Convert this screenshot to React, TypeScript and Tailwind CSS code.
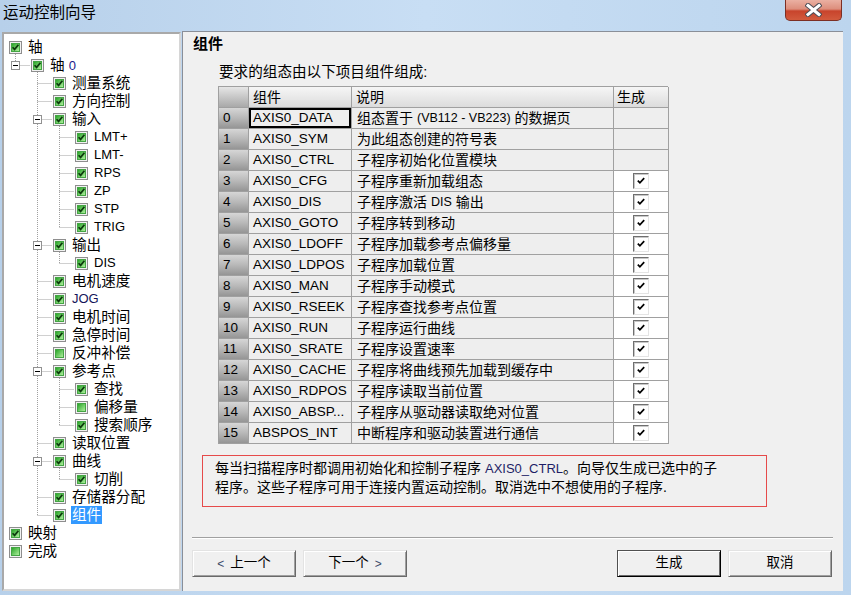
import React from 'react';

type TNode = { label: string; level: number; checked: boolean; exp?: boolean; sel?: boolean; latin?: boolean; navy?: boolean };

const tree: TNode[] = [
  { label: '轴', level: 0, checked: true },
  { label: '轴 0', level: 1, checked: true, exp: true },
  { label: '测量系统', level: 2, checked: true },
  { label: '方向控制', level: 2, checked: true },
  { label: '输入', level: 2, checked: true, exp: true },
  { label: 'LMT+', level: 3, checked: true, latin: true },
  { label: 'LMT-', level: 3, checked: true, latin: true },
  { label: 'RPS', level: 3, checked: true, latin: true },
  { label: 'ZP', level: 3, checked: true, latin: true },
  { label: 'STP', level: 3, checked: true, latin: true },
  { label: 'TRIG', level: 3, checked: true, latin: true },
  { label: '输出', level: 2, checked: true, exp: true },
  { label: 'DIS', level: 3, checked: true, latin: true },
  { label: '电机速度', level: 2, checked: true },
  { label: 'JOG', level: 2, checked: true, latin: true, navy: true },
  { label: '电机时间', level: 2, checked: true },
  { label: '急停时间', level: 2, checked: true },
  { label: '反冲补偿', level: 2, checked: false },
  { label: '参考点', level: 2, checked: true, exp: true },
  { label: '查找', level: 3, checked: true },
  { label: '偏移量', level: 3, checked: false },
  { label: '搜索顺序', level: 3, checked: true },
  { label: '读取位置', level: 2, checked: true },
  { label: '曲线', level: 2, checked: true, exp: true },
  { label: '切削', level: 3, checked: true },
  { label: '存储器分配', level: 2, checked: true },
  { label: '组件', level: 2, checked: true, sel: true },
  { label: '映射', level: 0, checked: true },
  { label: '完成', level: 0, checked: false },
];

const padByLevel = ['pl-[5px]', 'pl-[27px]', 'pl-[49px]', 'pl-[71px]'];

const ROW = 18;
const xc = (l: number) => 11 + 22 * l;

function TreeCheck({ checked }: { checked: boolean }) {
  return (
    <svg width="13" height="13" viewBox="0 0 13 13" className="shrink-0">
      <defs>
        <linearGradient id="tg" x1="0" y1="0" x2="1" y2="1">
          <stop offset="0" stopColor="#22a022" />
          <stop offset="1" stopColor="#b6f4a4" />
        </linearGradient>
      </defs>
      <rect x="0.5" y="0.5" width="12" height="12" fill="#f2f2f2" stroke="#8e8e8e" />
      <rect x="2.5" y="2.5" width="8" height="8" fill="url(#tg)" stroke="#44a544" />
      {checked && <path d="M3.6 6.2 L5.6 8.4 L9.4 3.8" stroke="#0d3a0d" strokeWidth="1.7" fill="none" />}
    </svg>
  );
}

function TreeLines() {
  const lines: React.ReactNode[] = [];
  const boxes: React.ReactNode[] = [];
  tree.forEach((n, i) => {
    if (n.level >= 1) {
      const y = ROW * i + 9.5;
      lines.push(
        <line key={'h' + i} x1={xc(n.level - 1) + 0.5} y1={y} x2={5 + 22 * n.level - 1} y2={y} stroke="#a0a0a0" strokeDasharray="1 1" />
      );
    }
    const kids: number[] = [];
    for (let j = i + 1; j < tree.length; j++) {
      if (tree[j].level <= n.level) break;
      if (tree[j].level === n.level + 1) kids.push(j);
    }
    if (kids.length) {
      const q = kids[kids.length - 1];
      lines.push(
        <line key={'v' + i} x1={xc(n.level) + 0.5} y1={ROW * i + 16} x2={xc(n.level) + 0.5} y2={ROW * q + 10} stroke="#a0a0a0" strokeDasharray="1 1" />
      );
    }
    if (n.exp) {
      const cx = xc(n.level - 1);
      const cy = ROW * i + 9;
      boxes.push(
        <g key={'b' + i}>
          <rect x={cx - 4 + 0.5} y={cy - 4 + 0.5} width="8" height="8" fill="#fff" stroke="#919191" />
          <line x1={cx - 2} y1={cy + 0.5} x2={cx + 3} y2={cy + 0.5} stroke="#000" />
        </g>
      );
    }
  });
  return (
    <svg className="absolute left-0 top-0 pointer-events-none" width="175" height={ROW * tree.length}>
      {lines}
      {boxes}
    </svg>
  );
}

function Tree() {
  return (
    <div className="w-[179px] mt-[1px] bg-white border-2 border-[#a9a9a9] border-r-[#d6d6d6] border-b-[#d6d6d6] pt-[4px]">
      <div className="relative">
        <TreeLines />
        {tree.map((n, i) => (
          <div key={i} className={`relative h-[18px] flex items-center ${padByLevel[n.level]}`}>
            <TreeCheck checked={n.checked} />
            <span
              className={`ml-[5px] h-[18px] leading-[18px] px-[1px] ${n.sel ? 'bg-[#3399ff] text-white' : n.navy ? 'text-[#14145a]' : 'text-black'} ${n.latin ? 'text-[13px]' : 'text-[14.6px]'}`}
            >
              {n.label === '轴 0' ? (
                <>
                  轴 <span className="text-[13px] text-[#1c1c8a]">0</span>
                </>
              ) : (
                n.label
              )}
            </span>
          </div>
        ))}
      </div>
    </div>
  );
}

type Row = { n: number; comp: string; desc: React.ReactNode; gen: boolean };

const L = ({ children }: { children: React.ReactNode }) => <span className="text-[12.5px] mx-[4px]">{children}</span>;

const rows: Row[] = [
  { n: 0, comp: 'AXIS0_DATA', desc: <>组态置于<L>(VB112 - VB223)</L>的数据页</>, gen: false },
  { n: 1, comp: 'AXIS0_SYM', desc: '为此组态创建的符号表', gen: false },
  { n: 2, comp: 'AXIS0_CTRL', desc: '子程序初始化位置模块', gen: false },
  { n: 3, comp: 'AXIS0_CFG', desc: '子程序重新加载组态', gen: true },
  { n: 4, comp: 'AXIS0_DIS', desc: <>子程序激活<L>DIS</L>输出</>, gen: true },
  { n: 5, comp: 'AXIS0_GOTO', desc: '子程序转到移动', gen: true },
  { n: 6, comp: 'AXIS0_LDOFF', desc: '子程序加载参考点偏移量', gen: true },
  { n: 7, comp: 'AXIS0_LDPOS', desc: '子程序加载位置', gen: true },
  { n: 8, comp: 'AXIS0_MAN', desc: '子程序手动模式', gen: true },
  { n: 9, comp: 'AXIS0_RSEEK', desc: '子程序查找参考点位置', gen: true },
  { n: 10, comp: 'AXIS0_RUN', desc: '子程序运行曲线', gen: true },
  { n: 11, comp: 'AXIS0_SRATE', desc: '子程序设置速率', gen: true },
  { n: 12, comp: 'AXIS0_CACHE', desc: '子程序将曲线预先加载到缓存中', gen: true },
  { n: 13, comp: 'AXIS0_RDPOS', desc: '子程序读取当前位置', gen: true },
  { n: 14, comp: 'AXIS0_ABSP...', desc: '子程序从驱动器读取绝对位置', gen: true },
  { n: 15, comp: 'ABSPOS_INT', desc: '中断程序和驱动装置进行通信', gen: true },
];

function CellCheck() {
  return (
    <div className="w-[16px] h-[16px] bg-white border border-t-[#6f6f6f] border-l-[#6f6f6f] border-r-[#e4e4e4] border-b-[#e4e4e4] shadow-[inset_1px_1px_0_#c8c8c8] flex items-center justify-center">
      <svg width="10" height="10" viewBox="0 0 10 10">
        <path d="M1.8 4.6 L3.9 6.8 L8.2 2.2" stroke="#000" strokeWidth="1.7" fill="none" />
      </svg>
    </div>
  );
}

function Table() {
  const cell = 'h-[21px] border-r border-b border-[#a0a0a0] flex items-center';
  return (
    <div className="ml-[35px] mt-[5px] w-[450px] grid grid-cols-[30px_103px_262px_55px] border-t border-l border-[#a0a0a0]">
      <div className={`${cell} bg-gradient-to-b from-[#e6e6e6] to-[#a9a9a9]`} />
      <div className={`${cell} bg-gradient-to-b from-[#f6f6f6] to-[#dcdcdc] pl-[4px] text-[14px]`}>组件</div>
      <div className={`${cell} bg-gradient-to-b from-[#f6f6f6] to-[#dcdcdc] pl-[4px] text-[14px]`}>说明</div>
      <div className={`${cell} bg-gradient-to-b from-[#f6f6f6] to-[#dcdcdc] pl-[3px] text-[14px]`}>生成</div>
      {rows.map((r) => (
        <React.Fragment key={r.n}>
          <div className={`${cell} bg-gradient-to-b from-[#d6d6d6] via-[#b8b8b8] to-[#959595] pl-[4px] text-[13.5px]`}>{r.n}</div>
          <div
            className={`${cell} bg-[#eeeeee] pl-[4px] text-[13.5px] ${r.n === 0 ? 'shadow-[inset_0_0_0_2px_#000]' : ''}`}
          >
            {r.comp}
          </div>
          <div className={`${cell} bg-[#eeeeee] pl-[5px] text-[14px] whitespace-nowrap`}>{r.desc}</div>
          <div className={`${cell} justify-center ${r.gen ? 'bg-white' : 'bg-[#eeeeee]'}`}>{r.gen && <CellCheck />}</div>
        </React.Fragment>
      ))}
    </div>
  );
}

function Btn({ children, def }: { children: React.ReactNode; def?: boolean }) {
  return (
    <div
      className={`w-[104px] h-[27px] flex items-center justify-center text-[13.5px] bg-[#f0f0f0] border ${
        def
          ? 'border-[#505050] border-r-black border-b-black shadow-[inset_1px_1px_0_#fff,inset_-1px_-1px_0_#696969]'
          : 'border-[#e3e3e3] border-r-[#696969] border-b-[#696969] shadow-[inset_1px_1px_0_#fff,inset_-1px_-1px_0_#a0a0a0]'
      }`}
    >
      {children}
    </div>
  );
}

function Main() {
  return (
    <div className="flex-1 ml-[1px] bg-[#f0f0f0] border-l border-t border-[#8a8f98] flex flex-col">
      <div className="ml-[10px] mt-[3px] h-[18px] leading-[18px] font-bold text-[15px]">组件</div>
      <div className="ml-[36px] mt-[10px] h-[18px] leading-[18px] text-[14.6px]">要求的组态由以下项目组件组成:</div>
      <Table />
      <div className="ml-[19px] mt-[11px] w-[565px] h-[52px] border border-[#e64a4a] pl-[12px] pt-[3px] text-[14px] leading-[18px]">
        <div className="whitespace-nowrap">
          每当扫描程序时都调用初始化和控制子程序<span className="text-[13px] text-[#1e1e66] ml-[4px]">AXIS0_CTRL</span>。向导仅生成已选中的子
        </div>
        <div className="whitespace-nowrap">程序。这些子程序可用于连接内置运动控制。取消选中不想使用的子程序.</div>
      </div>
      <div className="ml-[9px] mr-[10px] mt-[30px] h-[2px] border-t border-[#a0a0a0] border-b border-b-white" />
      <div className="ml-[9px] mr-[11px] mt-[11px] flex">
        <Btn>
          <span className="text-[#3a4a6a] mr-[6px] text-[12px]">&lt;</span>上一个
        </Btn>
        <div className="w-[7px]" />
        <Btn>
          下一个<span className="text-[#3a4a6a] ml-[6px] text-[12px]">&gt;</span>
        </Btn>
        <div className="flex-1" />
        <Btn def>生成</Btn>
        <div className="w-[7px]" />
        <Btn>取消</Btn>
      </div>
    </div>
  );
}

export default function App() {
  return (
    <div className="w-[851px] h-[595px] overflow-hidden flex flex-col bg-gradient-to-r from-[#b7d0ea] via-[#c8def4] to-[#bcd5ee] font-['Liberation_Sans','Noto_Sans_CJK_SC',sans-serif] text-black">
      <div className="h-[31px] flex items-start justify-between shrink-0">
        <div className="pl-[3px] pt-[4px] text-[15.5px] leading-[18px] text-black">运动控制向导</div>
        <div className="mr-[9px] w-[57px] h-[21px] rounded-b-[5px] border border-t-0 border-[#7c2f24] bg-[linear-gradient(to_bottom,#eab0a2_0%,#dd8e7c_45%,#c8442c_55%,#d25a3d_100%)] flex items-center justify-center">
          <svg width="17" height="14" viewBox="0 0 17 14">
            <path d="M3 2.5 L14 11.5 M14 2.5 L3 11.5" stroke="#4d4d55" strokeWidth="5" strokeLinecap="square" />
            <path d="M3 2.5 L14 11.5 M14 2.5 L3 11.5" stroke="#ffffff" strokeWidth="3" strokeLinecap="square" />
          </svg>
        </div>
      </div>
      <div className="flex-1 flex pl-[2px] pr-[8px] pb-[4px] min-h-0">
        <Tree />
        <Main />
      </div>
    </div>
  );
}
